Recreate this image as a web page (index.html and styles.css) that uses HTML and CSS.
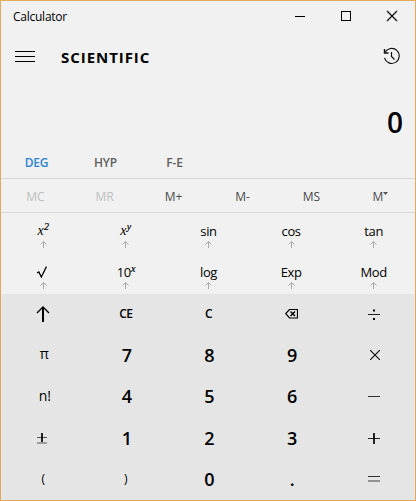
FILE: index.html
```html
<!DOCTYPE html>
<html lang="en">
<head>
<meta charset="utf-8">
<title>Calculator</title>
<link rel="stylesheet" href="styles.css">
</head>
<body>
<svg class="defs" width="0" height="0"><symbol id="up" viewBox="0 0 7 7"><path d="M3.500 0.500V7M0.500 3.500L3.500 .5L6.500 3.500" fill="none" stroke="#aaa"/></symbol></svg>
<main class="window">
  <header class="titlebar">
    <span class="title">Calculator</span>
    <div class="controls">
      <svg width="46" height="30" viewBox="0 0 46 30"><path d="M18 15.500h10" stroke="#000"/></svg>
      <svg width="46" height="30" viewBox="0 0 46 30"><rect x="18.500" y="10.500" width="9" height="9" fill="none" stroke="#000"/></svg>
      <svg width="46" height="30" viewBox="0 0 46 30"><path d="M18 10l10 10M28 10l-10 10" stroke="#000" stroke-width="1.100"/></svg>
    </div>
  </header>
  <div class="modebar">
    <svg class="menu" width="20" height="12" viewBox="0 0 20 12"><path d="M0 .5h20M0 5.500h20M0 10.500h20" stroke="#000"/></svg>
    <h1 class="mode">SCIENTIFIC</h1>
    <svg class="history" width="18" height="18" viewBox="0 0 18 18" fill="none" stroke="#111"><path d="M2.300 5A7.500 7.500 0 1 1 1.500 11" stroke-width="1.100"/><path d="M1.500 2v4h4" stroke-width="1.400"/><path d="M8.500 5v4.500l3 3" stroke-width="1.200"/></svg>
  </div>
  <output class="display">0</output>
  <nav class="options"><span class="active">DEG</span><span>HYP</span><span>F-E</span></nav>
  <div class="memory"><span class="off">MC</span><span class="off">MR</span><span>M+</span><span>M-</span><span>MS</span><span>M<svg class="caret" width="5" height="3" viewBox="0 0 5 3"><path d="M0 0h5L2.500 3z" fill="#555"/></svg></span></div>
  <section class="functions">
    <div class="fn"><span class="math">x<sup>2</sup></span><svg class="up"><use href="#up"/></svg></div>
    <div class="fn"><span class="math">x<sup>y</sup></span><svg class="up"><use href="#up"/></svg></div>
    <div class="fn"><span>sin</span><svg class="up"><use href="#up"/></svg></div>
    <div class="fn"><span>cos</span><svg class="up"><use href="#up"/></svg></div>
    <div class="fn"><span>tan</span><svg class="up"><use href="#up"/></svg></div>
    <div class="fn"><span class="root"><svg width="10" height="12" viewBox="0 0 10 12"><path d="M0 7l1.800-1L4.300 11L9.500 .5" fill="none" stroke="#000" stroke-width="1.300"/></svg></span><svg class="up"><use href="#up"/></svg></div>
    <div class="fn"><span class="power">10<sup>x</sup></span><svg class="up"><use href="#up"/></svg></div>
    <div class="fn"><span>log</span><svg class="up"><use href="#up"/></svg></div>
    <div class="fn"><span>Exp</span><svg class="up"><use href="#up"/></svg></div>
    <div class="fn"><span>Mod</span><svg class="up"><use href="#up"/></svg></div>
  </section>
  <section class="keypad">
    <div class="key"><svg width="14" height="16" viewBox="0 0 14 16" fill="none" stroke="#000"><path d="M7 1v15" stroke-width="2"/><path d="M1 7l6-6 6 6" stroke-width="1.300"/></svg></div>
    <div class="key clear">CE</div>
    <div class="key clear">C</div>
    <div class="key back"><svg width="13" height="10" viewBox="0 0 13 10" fill="none" stroke="#000"><path d="M4.500 .5h8v8.500h-8L.7 4.700z" stroke-width="1.200"/><path d="M5.500 2.500l4.500 4.500M10 2.500L5.500 7" stroke-width="1.400"/></svg></div>
    <div class="key"><svg width="12" height="12" viewBox="0 0 12 12"><path d="M0 6.500h12" stroke="#222"/><path d="M5 1.500h2v2H5zM5 10h2v2H5z"/></svg></div>

    <div class="key sym pi">π</div>
    <div class="key num">7</div>
    <div class="key num">8</div>
    <div class="key num">9</div>
    <div class="key times"><svg width="10" height="10" viewBox="0 0 10 10"><path d="M0 0l10 10M10 0L0 10" stroke="#111" stroke-width="1.200"/></svg></div>

    <div class="key sym fact">n!</div>
    <div class="key num">4</div>
    <div class="key num">5</div>
    <div class="key num">6</div>
    <div class="key"><svg width="12" height="12" viewBox="0 0 12 12"><path d="M0 6.500h12" stroke="#333"/></svg></div>

    <div class="key sign"><svg width="12" height="12" viewBox="0 0 12 12"><path d="M1 5.500h10M1 11h10" stroke="#555"/><path d="M6 1v9" stroke="#000" stroke-width="1.700"/></svg></div>
    <div class="key num">1</div>
    <div class="key num">2</div>
    <div class="key num">3</div>
    <div class="key"><svg width="12" height="12" viewBox="0 0 12 12"><path d="M0 6.500h12" stroke="#222"/><path d="M6 1v11" stroke="#000" stroke-width="1.700"/></svg></div>

    <div class="key paren">(</div>
    <div class="key paren">)</div>
    <div class="key num">0</div>
    <div class="key num">.</div>
    <div class="key"><svg width="12" height="12" viewBox="0 0 12 12"><path d="M0 3.500h12" stroke="#333"/><path d="M0 8h12" stroke="#888" stroke-width="1.800"/></svg></div>
  </section>
</main>
</body>
</html>
```
FILE: styles.css
```css
* { box-sizing: border-box; }
body { margin: 0; font-family: "Open Sans", "Noto Sans", sans-serif; color: #000; }
svg { display: block; flex: none; }
.defs { position: absolute; }
.window { width: 416px; height: 501px; border: 1px solid #e0a95c; background: #f1f1f1; display: flex; flex-direction: column; }
.titlebar { height: 30px; display: flex; justify-content: space-between; padding-left: 12px; }
.title { font-size: 12px; line-height: 31px; letter-spacing: -0.25px; }
.controls { display: flex; }
.modebar { height: 52px; display: flex; align-items: center; padding: 0 14px 0 14px; }
.menu { margin-top: 1px; }
.mode { margin: 0 auto 0 26px; font-size: 15px; line-height: 20px; font-weight: 700; letter-spacing: 0.95px; }
.history { margin-top: -2px; }
.display { display: block; height: 78px; padding: 20px 12px 0 0; text-align: right; font-size: 28px; line-height: 38px; font-weight: 600; }
.options, .memory { display: grid; grid-template-columns: repeat(6, 69px); font-size: 12px; font-weight: 500; color: #4a4a4a; text-align: center; }
.options { height: 18px; line-height: 20px; margin-top: -8px; margin-bottom: 7px; padding-left: 1px; font-weight: 600; letter-spacing: -0.2px; color: #5e5e5e; }
.options .active { color: #2c87d0; }
.memory { height: 35px; border-top: 1px solid #d8d8d8; border-bottom: 1px solid #d8d8d8; line-height: 35px; }
.memory .off { color: #bebebe; }
.caret { display: inline-block; vertical-align: 6px; }
.functions { display: grid; grid-template-columns: repeat(5, 1fr); grid-template-rows: 41px 40px; height: 81px; padding-left: 1px; font-size: 13px; }
.fn { display: flex; flex-direction: column; align-items: center; padding-top: 8px; }
.fn span { height: 20px; line-height: 20px; letter-spacing: -0.4px; }
.fn .math { font-family: "Liberation Serif", serif; font-style: italic; font-size: 14px; letter-spacing: 0.3px; }
.fn sup { font-family: "Liberation Serif", serif; font-style: italic; font-size: 10px; font-weight: 400; line-height: 0; vertical-align: 5px; -webkit-text-stroke: 0.2px #000; }
.fn .root { padding: 4px 2px 0 0; }
.up { width: 7px; height: 7px; }
.keypad { flex: 1; display: grid; grid-template-columns: repeat(5, 1fr); grid-template-rows: repeat(5, 41.3px); padding-left: 1px; background: #e5e5e5; }
.key { display: flex; align-items: center; justify-content: center; padding-bottom: 1px; }
.num { padding-left: 2px; font-size: 18px; font-weight: 600; }
.clear { font-size: 12px; font-weight: 600; letter-spacing: -0.4px; }
.sym { padding: 0 0 3px 2px; font-size: 14px; }
.fact { padding-left: 3px; }
.sign { padding-right: 2px; }
.times { padding: 0 0 0 2px; }
.paren { font-size: 12px; }
```
